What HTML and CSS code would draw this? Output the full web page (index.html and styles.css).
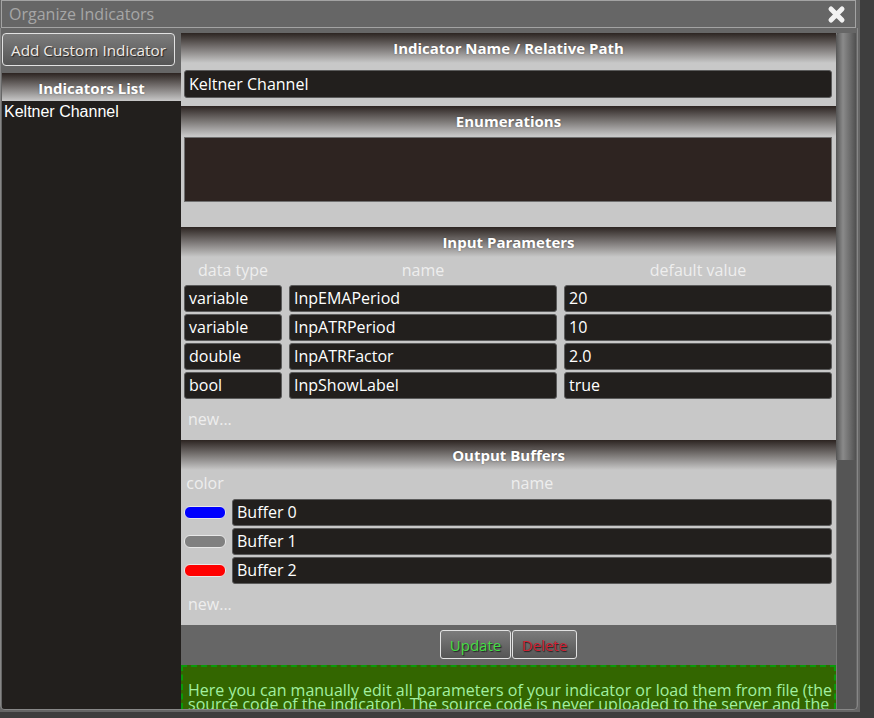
FILE: index.html
```html
<!DOCTYPE html>
<html lang="en">
<head>
    <meta charset="UTF-8">
    <meta name="viewport" content="width=device-width, initial-scale=1.0">
    <title>Organize Indicators</title>
    <link rel="stylesheet" href="styles.css">
</head>
<body>
    <div class="window">
        <div class="titlebar">
            <span class="title">Organize Indicators</span>
            <svg class="close" width="19" height="19" viewBox="0 0 19 19">
                <path d="M4 4 L15 15 M15 4 L4 15" stroke="#f2f2f2" stroke-width="5" stroke-linecap="round"/>
            </svg>
        </div>
        <div class="panel">
            <div class="sidebar">
                <button class="btn add-btn">Add Custom Indicator</button>
                <div class="list-head">Indicators List</div>
                <div class="list">
                    <div class="list-item">Keltner Channel</div>
                </div>
            </div>

            <div class="content">
                <div class="section-head">Indicator Name / Relative Path</div>
                <div class="name-row">
                    <div class="field">Keltner Channel</div>
                </div>

                <div class="section-head">Enumerations</div>
                <div class="enum-row">
                    <div class="enum-box"></div>
                </div>

                <div class="section-head">Input Parameters</div>
                <div class="params">
                    <div class="col-label">data type</div>
                    <div class="col-label">name</div>
                    <div class="col-label">default value</div>

                    <div class="field">variable</div>
                    <div class="field">InpEMAPeriod</div>
                    <div class="field">20</div>

                    <div class="field">variable</div>
                    <div class="field">InpATRPeriod</div>
                    <div class="field">10</div>

                    <div class="field">double</div>
                    <div class="field">InpATRFactor</div>
                    <div class="field">2.0</div>

                    <div class="field">bool</div>
                    <div class="field">InpShowLabel</div>
                    <div class="field">true</div>
                </div>
                <div class="new-link">new...</div>

                <div class="section-head">Output Buffers</div>
                <div class="buffers">
                    <div class="col-label">color</div>
                    <div class="col-label">name</div>

                    <div class="swatch-cell"><span class="swatch blue"></span></div>
                    <div class="field">Buffer 0</div>

                    <div class="swatch-cell"><span class="swatch gray"></span></div>
                    <div class="field">Buffer 1</div>

                    <div class="swatch-cell"><span class="swatch red"></span></div>
                    <div class="field">Buffer 2</div>
                </div>
                <div class="new-link">new...</div>

                <div class="actions">
                    <button class="btn update-btn">Update</button>
                    <button class="btn delete-btn">Delete</button>
                </div>

                <div class="info">
                    Here you can manually edit all parameters of your indicator or load them from file (the source code of the indicator). The source code is never uploaded to the server and the parameters are only used to build the indicator settings.
                </div>
            </div>

            <div class="scrollbar">
                <div class="thumb"></div>
            </div>
        </div>
    </div>
</body>
</html>
```

FILE: styles.css
```css
body {
    margin: 0;
    padding: 0;
    background-color: #3e3e3e;
    font-family: "Open Sans", "Noto Sans", sans-serif;
    font-size: 16px;
    overflow: hidden;
}
.window {
    width: 860px;
    height: 712px;
    background-color: #666;
    display: flex;
    flex-direction: column;
    box-sizing: border-box;
    padding-bottom: 2px;
}
.titlebar {
    height: 28px;
    width: 855px;
    margin-left: 1px;
    box-sizing: border-box;
    border: 1px solid #a3a3a3;
    display: flex;
    align-items: center;
    justify-content: space-between;
    padding: 0 9px 0 7px;
    flex-shrink: 0;
}
.title {
    color: #a6a6a6;
    font-size: 16px;
}
.close {
    display: block;
}
.panel {
    flex: 1;
    min-height: 0;
    width: 858px;
    box-sizing: border-box;
    border: 1px solid #878787;
    border-top: none;
    border-radius: 0 0 5px 5px;
    padding-top: 5px;
    display: flex;
    overflow: hidden;
}

/* left column */
.sidebar {
    width: 180px;
    box-sizing: border-box;
    padding-left: 1px;
    display: flex;
    flex-direction: column;
}
.btn {
    font-family: "Open Sans", "Noto Sans", sans-serif;
    font-size: 15px;
    background: linear-gradient(to bottom, #7c7c7c, #555);
    border: 1px solid #e2e2e2;
    border-radius: 4px;
    cursor: pointer;
    padding: 0;
}
.add-btn {
    width: 173px;
    height: 33px;
    margin-bottom: 7px;
    color: #f0ebe6;
    font-size: 15.3px;
    text-shadow: 1px 1px 1px #222;
}
.list-head {
    height: 28px;
    line-height: 30px;
    text-align: center;
    font-weight: bold;
    font-size: 15px;
    color: #fff;
    text-shadow: 0 0 2px rgba(0, 0, 0, 0.35);
    background: linear-gradient(to bottom, #2c2421, #c8c8c8);
}
.list {
    flex: 1;
    background-color: #221f1d;
}
.list-item {
    font-family: "Liberation Sans", Arial, sans-serif;
    font-size: 16px;
    color: #fff;
    padding: 1px 0 0 2px;
    line-height: 20px;
}

/* main form */
.content {
    width: 655px;
    flex-shrink: 0;
    background-color: #c8c8c8;
    overflow: hidden;
}
.section-head {
    height: 30px;
    line-height: 30px;
    text-align: center;
    font-weight: bold;
    font-size: 15px;
    color: #fff;
    text-shadow: 0 0 2px rgba(0, 0, 0, 0.35);
    background: linear-gradient(to bottom, #2c2421, #c8c8c8);
}
.field {
    height: 27px;
    line-height: 25px;
    box-sizing: border-box;
    background-color: #221f1d;
    border: 1px solid #5b5b5b;
    border-radius: 3px;
    color: #fff;
    padding-left: 4px;
    white-space: nowrap;
    overflow: hidden;
}
.name-row {
    padding: 7px 4px 8px 3px;
}
.name-row .field {
    height: 28px;
    line-height: 26px;
}
.enum-row {
    padding: 1px 4px 25px 3px;
}
.enum-box {
    height: 65px;
    box-sizing: border-box;
    background-color: #2e2421;
    border: 1px solid #707070;
}
.col-label {
    color: #eee;
    text-align: center;
    line-height: 26px;
    height: 26px;
}
.params {
    display: grid;
    grid-template-columns: 98px 1fr 1fr;
    column-gap: 7px;
    row-gap: 2px;
    padding: 0 4px 0 3px;
}
.buffers {
    display: grid;
    grid-template-columns: 42px 1fr;
    column-gap: 6px;
    row-gap: 2px;
    padding: 0 4px 0 3px;
}
.buffers .col-label {
    height: 27px;
    line-height: 27px;
}
.swatch-cell {
    display: flex;
    align-items: center;
}
.swatch {
    display: block;
    width: 42px;
    height: 13px;
    box-sizing: border-box;
    border: 1px solid #e8e8e8;
    border-radius: 6px;
}
.swatch.blue { background-color: #0000ff; }
.swatch.gray { background-color: #808080; }
.swatch.red { background-color: #ff0000; }
.new-link {
    height: 41px;
    line-height: 41px;
    padding-left: 7px;
    color: #eee;
}
.actions {
    background-color: #666;
    height: 40px;
    box-sizing: border-box;
    padding-top: 5px;
    display: flex;
    justify-content: center;
    gap: 1px;
}
.update-btn,
.delete-btn {
    height: 29px;
    border-radius: 3px;
    text-shadow: 1px 1px 1px #222;
}
.update-btn {
    width: 71px;
    color: #44dd44;
}
.delete-btn {
    width: 65px;
    color: #cc2233;
}
.info {
    background-color: #336600;
    border: 2px dashed #0a9a0a;
    color: #a2f0a0;
    line-height: 14px;
    padding: 16px 2px 20px 5px;
}

/* fake scrollbar */
.scrollbar {
    width: 20px;
    flex-shrink: 0;
    background-color: #555;
    box-shadow: inset 1px 0 0 #7a7a7a;
}
.thumb {
    height: 427px;
    border-radius: 4px 4px 0 0;
    background: linear-gradient(to right, #555, #8a8a8a 35%, #6c6c6c 70%, #505050);
}
```
